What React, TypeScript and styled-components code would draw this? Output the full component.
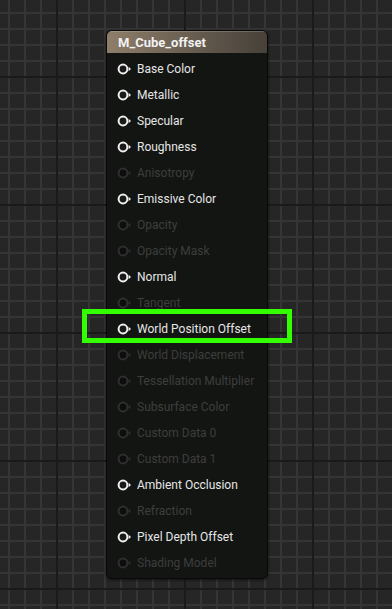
import { FC } from 'react'
import styled, { createGlobalStyle } from 'styled-components'

const GlobalStyle = createGlobalStyle`
  html, body { margin: 0; padding: 0; }
  body {
    width: 392px;
    height: 609px;
    overflow: hidden;
    font-family: 'Roboto', 'Liberation Sans', sans-serif;
    background-color: #262626;
    background-image:
      linear-gradient(to right, #1a1a1a 2px, transparent 2px),
      linear-gradient(to bottom, #1a1a1a 2px, transparent 2px),
      linear-gradient(to right, #353535 2px, transparent 2px),
      linear-gradient(to bottom, #353535 2px, transparent 2px);
    background-size: 128px 128px, 128px 128px, 16px 16px, 16px 16px;
    background-position: 56px 0, 0 76px, 8px 0, 0 12px;
  }
`

const Canvas = styled.main`
  position: relative;
  width: 392px;
  height: 609px;
  padding: 30px 0 0 106px;
  box-sizing: border-box;
`

const Node = styled.section`
  width: 160px;
  border-radius: 6px;
  background: #131513;
  border: 1px solid #070807;
  box-shadow: 0 1px 3px rgba(0,0,0,0.6);
  overflow: hidden;
  padding-bottom: 2px;
`

const Header = styled.div`
  height: 22px;
  display: flex;
  align-items: center;
  padding-left: 11px;
  background: linear-gradient(to right, #8e7e6a 0%, #6d6254 45%, #474139 100%);
  box-shadow: inset 0 1px 0 rgba(255,255,255,0.18);
  color: #f2f2f2;
  font-size: 13px;
  font-weight: 700;
`

const Pins = styled.ul`
  list-style: none;
  margin: 0;
  padding: 3px 0 0;
`

const Row = styled.li<{ $active: boolean }>`
  height: 26px;
  display: flex;
  align-items: center;
  gap: 5px;
  padding-left: 10px;
  font-size: 12px;
  color: ${p => (p.$active ? '#e6e6e6' : '#3d3e3d')};
`

const Highlight = styled.div`
  position: absolute;
  left: 82px;
  top: 309px;
  width: 210px;
  height: 34px;
  box-sizing: border-box;
  border: 5px solid #33ff00;
`

const PinIcon: FC<{ active: boolean }> = ({ active }) => {
  const c = active ? '#f0f0f0' : '#2e2f2e'
  return (
    <svg width="15" height="12" viewBox="0 0 15 12">
      <circle cx="6" cy="6" r="4.4" fill={active ? '#1a1a1a' : '#0c0d0c'} stroke={c} strokeWidth="2" />
      <path d="M11.6 3.8 L14 6 L11.6 8.2 Z" fill={c} />
    </svg>
  )
}

const pins: [string, boolean][] = [
  ['Base Color', true],
  ['Metallic', true],
  ['Specular', true],
  ['Roughness', true],
  ['Anisotropy', false],
  ['Emissive Color', true],
  ['Opacity', false],
  ['Opacity Mask', false],
  ['Normal', true],
  ['Tangent', false],
  ['World Position Offset', true],
  ['World Displacement', false],
  ['Tessellation Multiplier', false],
  ['Subsurface Color', false],
  ['Custom Data 0', false],
  ['Custom Data 1', false],
  ['Ambient Occlusion', true],
  ['Refraction', false],
  ['Pixel Depth Offset', true],
  ['Shading Model', false],
]

export default function App() {
  return (
    <>
      <GlobalStyle />
      <Canvas>
        <Node>
          <Header>M_Cube_offset</Header>
          <Pins>
            {pins.map(([name, active]) => (
              <Row key={name} $active={active}>
                <PinIcon active={active} />
                {name}
              </Row>
            ))}
          </Pins>
        </Node>
        <Highlight />
      </Canvas>
    </>
  )
}
